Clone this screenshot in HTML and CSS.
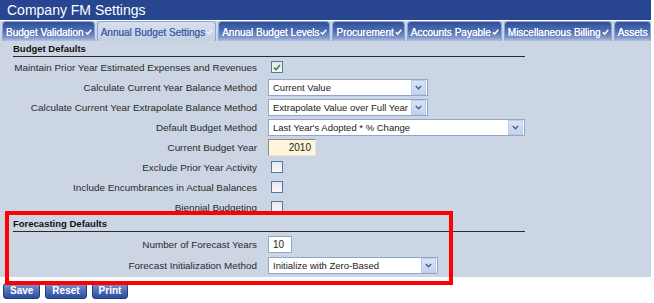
FILE: index.html
```html
<!DOCTYPE html>
<html lang="en">
<head>
  <meta charset="UTF-8" />
  <title>Company FM Settings</title>
  <link rel="stylesheet" href="styles.css">
</head>
<body>
  <div class="page">
    <div class="title">Company FM Settings</div>

    <!-- Tab strip -->
    <div class="tabs">
      <div class="tab">Budget Validation <svg class="tick" width="7" height="6" viewBox="0 0 7 6"><path d="M0.8 3.2 L2.7 5 L6.3 0.8" fill="none" stroke="#fff" stroke-width="1.5"/></svg></div>
      <div class="tab active">Annual Budget Settings <svg class="tick" width="7" height="6" viewBox="0 0 7 6"><path d="M0.8 3.2 L2.7 5 L6.3 0.8" fill="none" stroke="#fff" stroke-width="1.5"/></svg></div>
      <div class="tab">Annual Budget Levels <svg class="tick" width="7" height="6" viewBox="0 0 7 6"><path d="M0.8 3.2 L2.7 5 L6.3 0.8" fill="none" stroke="#fff" stroke-width="1.5"/></svg></div>
      <div class="tab">Procurement <svg class="tick" width="7" height="6" viewBox="0 0 7 6"><path d="M0.8 3.2 L2.7 5 L6.3 0.8" fill="none" stroke="#fff" stroke-width="1.5"/></svg></div>
      <div class="tab">Accounts Payable <svg class="tick" width="7" height="6" viewBox="0 0 7 6"><path d="M0.8 3.2 L2.7 5 L6.3 0.8" fill="none" stroke="#fff" stroke-width="1.5"/></svg></div>
      <div class="tab">Miscellaneous Billing <svg class="tick" width="7" height="6" viewBox="0 0 7 6"><path d="M0.8 3.2 L2.7 5 L6.3 0.8" fill="none" stroke="#fff" stroke-width="1.5"/></svg></div>
      <div class="tab">Assets</div>
    </div>

    <div class="content">
      <div class="section-head">Budget Defaults</div>
      <div class="form">
        <div class="lbl">Maintain Prior Year Estimated Expenses and Revenues</div>
        <div class="ctl"><span class="check"><svg width="8" height="7" viewBox="0 0 8 7"><path d="M1 3.6 L3.1 5.6 L7 1" fill="none" stroke="#1e9a1e" stroke-width="1.6"/></svg></span></div>

        <div class="lbl">Calculate Current Year Balance Method</div>
        <div class="ctl"><div class="select w160"><span class="val">Current Value</span><span class="arrow"><svg width="7" height="5" viewBox="0 0 7 5"><path d="M0.8 1 L3.5 3.8 L6.2 1" fill="none" stroke="#4a5f8a" stroke-width="1.4"/></svg></span></div></div>

        <div class="lbl">Calculate Current Year Extrapolate Balance Method</div>
        <div class="ctl"><div class="select w160"><span class="val">Extrapolate Value over Full Year</span><span class="arrow"><svg width="7" height="5" viewBox="0 0 7 5"><path d="M0.8 1 L3.5 3.8 L6.2 1" fill="none" stroke="#4a5f8a" stroke-width="1.4"/></svg></span></div></div>

        <div class="lbl">Default Budget Method</div>
        <div class="ctl"><div class="select w257"><span class="val">Last Year's Adopted * % Change</span><span class="arrow"><svg width="7" height="5" viewBox="0 0 7 5"><path d="M0.8 1 L3.5 3.8 L6.2 1" fill="none" stroke="#4a5f8a" stroke-width="1.4"/></svg></span></div></div>

        <div class="lbl">Current Budget Year</div>
        <div class="ctl"><div class="field year">2010</div></div>

        <div class="lbl">Exclude Prior Year Activity</div>
        <div class="ctl"><span class="check"></span></div>

        <div class="lbl">Include Encumbrances in Actual Balances</div>
        <div class="ctl"><span class="check"></span></div>

        <div class="lbl">Biennial Budgeting</div>
        <div class="ctl"><span class="check"></span></div>
      </div>

      <div class="section-head">Forecasting Defaults</div>
      <div class="form forecast">
        <div class="lbl">Number of Forecast Years</div>
        <div class="ctl"><div class="field years">10</div></div>

        <div class="lbl">Forecast Initialization Method</div>
        <div class="ctl"><div class="select w170"><span class="val">Initialize with Zero-Based</span><span class="arrow"><svg width="7" height="5" viewBox="0 0 7 5"><path d="M0.8 1 L3.5 3.8 L6.2 1" fill="none" stroke="#4a5f8a" stroke-width="1.4"/></svg></span></div></div>
      </div>
    </div>

    <div class="actions">
      <button class="btn">Save</button>
      <button class="btn">Reset</button>
      <button class="btn">Print</button>
    </div>

    <!-- red annotation box drawn over the form -->
    <div class="callout"></div>
  </div>
</body>
</html>
```

FILE: styles.css
```css
/* Basic styling */
body {
  margin: 0;
  background-color: #fff;
  font-family: "Liberation Sans", Arial, sans-serif;
  font-size: 10px;
  color: #222;
}

.page {
  position: relative;
  width: 651px;
  height: 303px;
  overflow: hidden;
}

.title {
  height: 20px;
  line-height: 20px;
  padding-left: 7px;
  background-color: #27468f;
  color: #fff;
  font-size: 14px;
  border-bottom: 1px solid #fff;
}

/* Tabs */
.tabs {
  display: flex;
  gap: 2px;
  height: 20px;
  padding-left: 2px;
  background-color: #ccd5e3;
  white-space: nowrap;
  overflow: hidden;
}

.tab {
  display: flex;
  align-items: center;
  gap: 1px;
  flex-shrink: 0;
  padding: 1px 2px 0 3px;
  border: 1px solid #8ea5d2;
  border-bottom: none;
  border-radius: 4px 4px 0 0;
  background: linear-gradient(#2f4f98, #4d6cb3 45%, #7b93c8 80%, #b4c2e0);
  color: #fff;
  font-size: 10px;
  text-shadow: 0 0 0.6px #fff;
}

.tab.active {
  background: linear-gradient(#d7dfee, #c5cfe4);
  color: #4663a8;
  text-shadow: 0 0 0.6px #4663a8;
}

.tab.active .tick path {
  stroke: #eef2fa;
}

/* Form area */
.content {
  background-color: #ccd5e3;
  padding: 1px 0 1px;
}

.section-head {
  width: 512px;
  margin-left: 13px;
  line-height: 14px;
  font-weight: bold;
  font-size: 9.5px;
  color: #111;
  border-bottom: 1px solid #2a2a2a;
}

.form {
  display: grid;
  grid-template-columns: 257px 1fr;
  grid-auto-rows: 20px;
  column-gap: 11px;
  align-items: center;
}

.form.forecast {
  grid-auto-rows: 21px;
  padding-top: 2px;
}

.lbl {
  text-align: right;
  font-size: 9.9px;
  color: #2a2a2a;
  white-space: nowrap;
}

.ctl {
  display: flex;
  align-items: center;
}

.check {
  display: flex;
  align-items: center;
  justify-content: center;
  width: 12px;
  height: 12px;
  margin-left: 3px;
  box-sizing: border-box;
  border: 1px solid #5478a6;
  background: linear-gradient(#e4e8ee, #f8f9fb);
}

.select {
  display: flex;
  align-items: center;
  height: 17px;
  box-sizing: border-box;
  padding-left: 4px;
  border: 1px solid #91a7c9;
  background-color: #fff;
  color: #222;
  font-size: 9.5px;
  white-space: nowrap;
}

.select .val {
  overflow: hidden;
}

.select .arrow {
  display: flex;
  align-items: center;
  justify-content: center;
  flex-shrink: 0;
  width: 13px;
  height: 13px;
  margin-left: auto;
  margin-right: 1px;
  border: 1px solid #bccbe6;
  background: linear-gradient(#dae4f6, #c2d3f0);
}

.w160 { width: 160px; }
.w170 { width: 170px; }
.w257 { width: 257px; }

.field {
  height: 17px;
  line-height: 15px;
  box-sizing: border-box;
  padding: 0 4px;
  border: 1px solid #91a7c9;
  background-color: #fff;
}

.field.year {
  width: 48px;
  text-align: right;
  background-color: #fff5dc;
  border-color: #8c8c80 #e8e4d6 #e8e4d6 #8c8c80;
}

.field.years {
  width: 24px;
}

/* Buttons */
.actions {
  display: flex;
  gap: 5px;
  padding: 6px 0 0 3px;
}

.btn {
  height: 16px;
  padding: 0 6px;
  border: 1px solid #1f3d82;
  border-radius: 3px;
  background: linear-gradient(#7994d0, #4a69b3 55%, #2e4e9b);
  color: #fff;
  font-family: "Liberation Sans", Arial, sans-serif;
  font-size: 10px;
  font-weight: bold;
  line-height: 14px;
}

.callout {
  position: absolute;
  left: 5px;
  top: 211px;
  width: 448px;
  height: 74px;
  box-sizing: border-box;
  border: 4px solid #ff0000;
}
```
